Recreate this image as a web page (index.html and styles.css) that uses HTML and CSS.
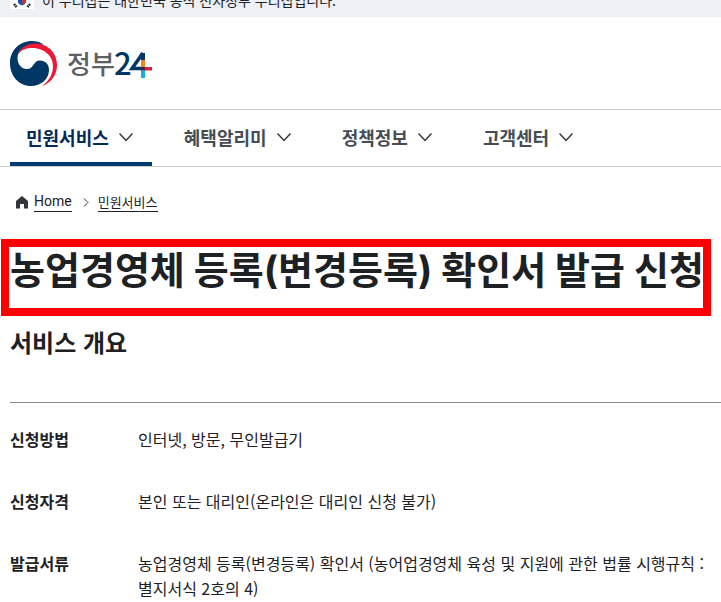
FILE: index.html
```html
<!DOCTYPE html>
<html lang="ko">
<head>
<meta charset="utf-8">
<meta name="viewport" content="width=device-width, initial-scale=1">
<title>정부24</title>
<link rel="stylesheet" href="styles.css">
</head>
<body>
<div class="notice">
  <svg class="flag" viewBox="0 0 24 16" width="24" height="16" aria-hidden="true">
    <rect width="24" height="16" fill="#fff"/>
    <g transform="rotate(25 12 8)">
      <circle cx="12" cy="8" r="4" fill="#0f56a8"/>
      <path d="M8 8a4 4 0 0 1 8 0a2 2 0 0 1-4 0a2 2 0 0 0-4 0z" fill="#d02f3f"/>
    </g>
    <path d="M4 5l2.500-3M17.500 2l2.500 3M4 11l2.500 3M17.500 14l2.500-3" stroke="#222" stroke-width="2.500" stroke-dasharray="1.700 .5"/>
  </svg>
  <span class="notice-text">이 누리집은 대한민국 공식 전자정부 누리집입니다.</span>
</div>
<header class="header">
  <a class="logo" href="#">
    <svg width="144" height="48" viewBox="0 0 144 48" role="img" aria-label="정부24">
      <path d="M34 4.500C30 2 26 1 22 1C9 1 0 11 0 23C0 36 9 46 21 46C31 46 39 39 39 30C39 24 35 20.500 30 20.500C23 20.500 24 29 17 29C11 29 7.500 24 7.500 18C7.500 10 15 5 24 5Z" fill="#003764"/>
      <path d="M8 15C10 8 17 3.500 25 3.500C38 3.500 47 13 47 25C47 35 41 43 32 46C39 41 43 34 43 26C43 15 33 8 22 8C15 8 11 10 8 15Z" fill="#f01837"/>
      <text class="logo-name" x="57" y="34">정부</text>
      <text class="logo-number" x="104" y="35">2</text>
      <path d="M133 13L122 28.500H132" fill="none" stroke="#003764" stroke-width="3.500"/>
      <path d="M130.500 13H135v7h-4v-4h-2z" fill="#003764"/>
      <path d="M131 20h4v7h-4z" fill="#f58220"/>
      <path d="M131 30.500h4V38h-4z" fill="#16aee8"/>
      <path d="M135 27h7v3.500h-7z" fill="#e51b35"/>
      <path d="M131 27h4v3.500h-4z" fill="#462045"/>
    </svg>
  </a>
</header>
<nav class="nav" aria-label="주 메뉴">
  <button class="nav-item active" type="button">민원서비스<svg class="chevron" width="14" height="9" viewBox="0 0 14 9"><path d="M.5 .5L7 7.500L13.500 .5"/></svg></button>
  <button class="nav-item" type="button">혜택알리미<svg class="chevron" width="14" height="9" viewBox="0 0 14 9"><path d="M.5 .5L7 7.500L13.500 .5"/></svg></button>
  <button class="nav-item" type="button">정책정보<svg class="chevron" width="14" height="9" viewBox="0 0 14 9"><path d="M.5 .5L7 7.500L13.500 .5"/></svg></button>
  <button class="nav-item" type="button">고객센터<svg class="chevron" width="14" height="9" viewBox="0 0 14 9"><path d="M.5 .5L7 7.500L13.500 .5"/></svg></button>
</nav>
<main>
  <nav class="breadcrumb" aria-label="현재 위치">
    <svg class="home" width="12" height="13" viewBox="0 0 12 13" aria-hidden="true"><path d="M6 0L0 5v7.500h4V8h4v4.500h4V5z" fill="#33363d"/></svg>
    <a class="crumb-home" href="#">Home</a>
    <svg class="separator" width="6" height="9" viewBox="0 0 6 9" aria-hidden="true"><path d="M1 .5l4 4-4 4"/></svg>
    <a href="#">민원서비스</a>
  </nav>
  <h1 class="title">농업경영체 등록(변경등록) 확인서 발급 신청</h1>
  <section class="overview">
    <h2>서비스 개요</h2>
    <dl class="details">
      <dt>신청방법</dt>
      <dd>인터넷, 방문, 무인발급기</dd>
      <dt>신청자격</dt>
      <dd>본인 또는 대리인(온라인은 대리인 신청 불가)</dd>
      <dt>발급서류</dt>
      <dd>농업경영체 등록(변경등록) 확인서 (농어업경영체 육성 및 지원에 관한 법률 시행규칙 : 별지서식 2호의 4)</dd>
    </dl>
  </section>
</main>
</body>
</html>
```

FILE: styles.css
```css
* {
  box-sizing: border-box;
}

body {
  margin: 0;
  background: #fff;
  color: #1e2124;
  font-family: "Noto Sans CJK KR", sans-serif;
  font-size: 16px;
  line-height: 25px;
}

a {
  color: inherit;
  text-decoration: none;
}

.notice {
  display: flex;
  align-items: flex-end;
  gap: 8px;
  height: 17px;
  padding: 0 10px 8px;
  overflow: hidden;
  background: #edf0f5;
}

.flag {
  flex: none;
}

.notice-text {
  font-size: 14px;
  line-height: 18px;
  white-space: nowrap;
}

.header {
  padding: 23px 10px 21px;
  border-bottom: 1px solid #cdd1d5;
}

.logo,
.logo svg {
  display: block;
}

.logo {
  width: fit-content;
}

.logo-name {
  fill: #5e6064;
  font-size: 26px;
  font-weight: 500;
}

.logo-number {
  fill: #003764;
  font-size: 31px;
  font-weight: 500;
}

.nav {
  display: flex;
  gap: 16px;
  padding: 0 10px;
  border-bottom: 1px solid #cdd1d5;
}

.nav-item {
  display: flex;
  align-items: center;
  gap: 10px;
  height: 56px;
  padding: 6px 19px 4px 16px;
  border: 0;
  border-bottom: 4px solid transparent;
  background: none;
  color: #464c53;
  font: inherit;
  font-size: 18px;
  font-weight: 700;
  white-space: nowrap;
}

.nav-item.active {
  border-color: #003b70;
  color: #052b57;
}

.chevron,
.separator {
  fill: none;
  stroke: #33363d;
}

.chevron {
  stroke-width: 1.5;
}

.breadcrumb {
  display: flex;
  align-items: center;
  height: 72px;
  padding: 0 16px 2px;
  font-size: 13px;
  line-height: 19px;
}

.breadcrumb a {
  border-bottom: 1px solid #1e2124;
}

.breadcrumb .crumb-home {
  font-family: Roboto, sans-serif;
  font-size: 14px;
}

.home {
  margin-right: 6px;
}

.separator {
  margin: 0 9px 0 11px;
}

.title {
  margin: 0 10px 0 1px;
  padding: 0 0 14px 1px;
  border: 8px solid #f00;
  font-family: Inter, "Noto Sans CJK KR", sans-serif;
  font-size: 38px;
  font-weight: 700;
  line-height: 47px;
  white-space: nowrap;
}

.overview {
  padding-left: 10px;
}

.overview h2 {
  margin: 0;
  padding: 10px 0 44px;
  border-bottom: 1px solid #8a8c8f;
  font-size: 24px;
  font-weight: 700;
  line-height: 32px;
}

.details {
  display: grid;
  grid-template-columns: 96px 1fr;
  gap: 37px 32px;
  margin: 24px 10px 0 0;
}

.details dt {
  font-weight: 700;
}

.details dd {
  margin: 0;
}
```
